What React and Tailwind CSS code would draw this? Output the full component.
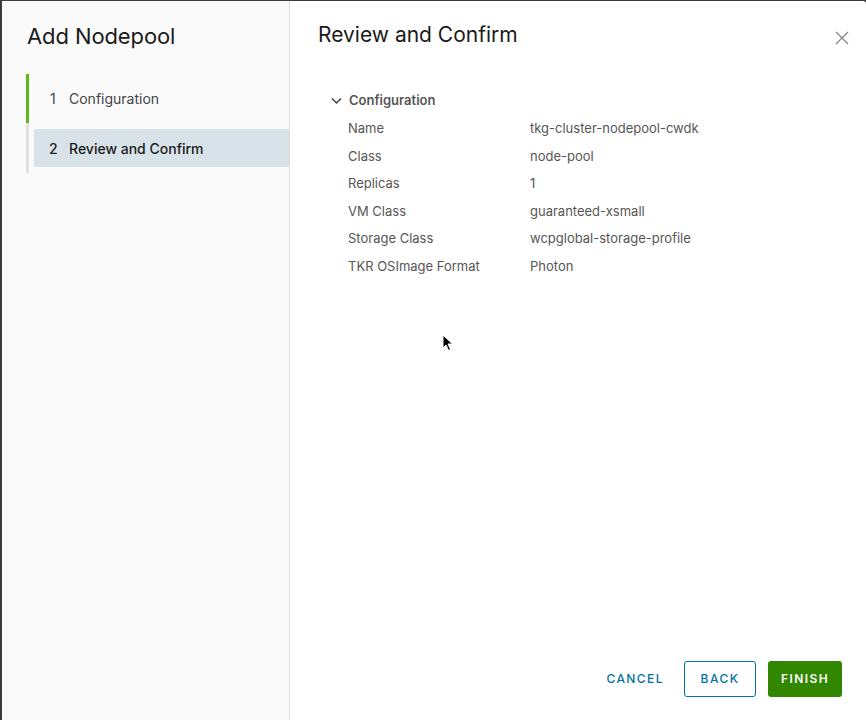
import React from "react";

const rows = [
  ["Name", "tkg-cluster-nodepool-cwdk"],
  ["Class", "node-pool"],
  ["Replicas", "1"],
  ["VM Class", "guaranteed-xsmall"],
  ["Storage Class", "wcpglobal-storage-profile"],
  ["TKR OSImage Format", "Photon"],
];

export default function App() {
  return (
    <div
      className="w-[866px] h-[720px] bg-[#3b3b3b] pl-[2px] pt-[1px] overflow-hidden relative"
      style={{ fontFamily: "Inter, 'Open Sans', Arial, sans-serif" }}
    >
      <div className="flex h-[719px] bg-white rounded-tr-[3px] overflow-hidden">
        {/* Left nav */}
        <div className="w-[288px] shrink-0 bg-[#fafafa] border-r border-[#dddddd] flex flex-col">
          <div className="pl-[25px] pt-[21px] text-[22px] leading-[28px] text-[#1b1b1b] tracking-[-0.1px]">
            Add Nodepool
          </div>
          <div className="mt-[24px] ml-[24px] flex flex-col">
            <div className="flex items-center h-[49px] border-l-[3px] border-[#5eb715] pl-[21px] text-[14px] text-[#454545]">
              <span className="w-[19px]">1</span>
              <span>Configuration</span>
            </div>
            <div className="border-l-[3px] border-[#e0e0e0] pt-[6px] pb-[6px] pl-[5px]">
              <div className="flex items-center h-[38px] bg-[#d8e3e9] rounded-l-[3px] pl-[15px] text-[14px] text-[#1b1b1b] font-medium">
                <span className="w-[20px]">2</span>
                <span>Review and Confirm</span>
              </div>
            </div>
          </div>
        </div>

        {/* Right content */}
        <div className="flex-1 flex flex-col relative">
          <div className="flex items-start justify-between pl-[28px] pr-[17px] pt-[20px]">
            <div className="text-[21px] leading-[28px] text-[#1b1b1b]">Review and Confirm</div>
            <svg width="14" height="14" viewBox="0 0 14 14" className="mt-[10px]">
              <path d="M1 1 L13 13 M13 1 L1 13" stroke="#8a8a8a" strokeWidth="1.4" fill="none" />
            </svg>
          </div>

          <div className="pl-[41px] pt-[43px]">
            <div className="flex items-center h-[18px] text-[13px] font-semibold text-[#565656]">
              <svg width="11" height="8" viewBox="0 0 11 8" className="mr-[7px]">
                <path d="M1 1.5 L5.5 6 L10 1.5" stroke="#454545" strokeWidth="1.5" fill="none" />
              </svg>
              Configuration
            </div>
            <div className="flex flex-col pl-[17px] pt-[5px]">
              {rows.map(([k, v]) => (
                <div key={k} className="flex items-center h-[27.6px] text-[13px] text-[#565656]">
                  <span className="w-[182px]">{k}</span>
                  <span>{v}</span>
                </div>
              ))}
            </div>
          </div>

          <div className="mt-auto flex items-center justify-end pr-[24px] pb-[23px]">
            <button className="h-[36px] px-[6px] text-[12px] font-medium tracking-[0.12em] text-[#0072a3]">
              CANCEL
            </button>
            <button className="ml-[14px] h-[36px] w-[72px] border border-[#0072a3] rounded-[3px] text-[12px] font-medium tracking-[0.12em] text-[#0072a3] bg-white">
              BACK
            </button>
            <button className="ml-[12px] h-[36px] w-[74px] rounded-[3px] bg-[#318700] text-[12px] font-semibold tracking-[0.12em] text-white">
              FINISH
            </button>
          </div>

          {/* mouse cursor */}
          <svg
            width="12"
            height="18"
            viewBox="0 0 12 18"
            className="absolute left-[152px] top-[333px]"
          >
            <path d="M1 1 L1 14 L4 11 L6.5 16.5 L8.5 15.5 L6 10 L10.5 10 Z" fill="#000" stroke="#fff" strokeWidth="1" />
          </svg>
        </div>
      </div>
    </div>
  );
}
